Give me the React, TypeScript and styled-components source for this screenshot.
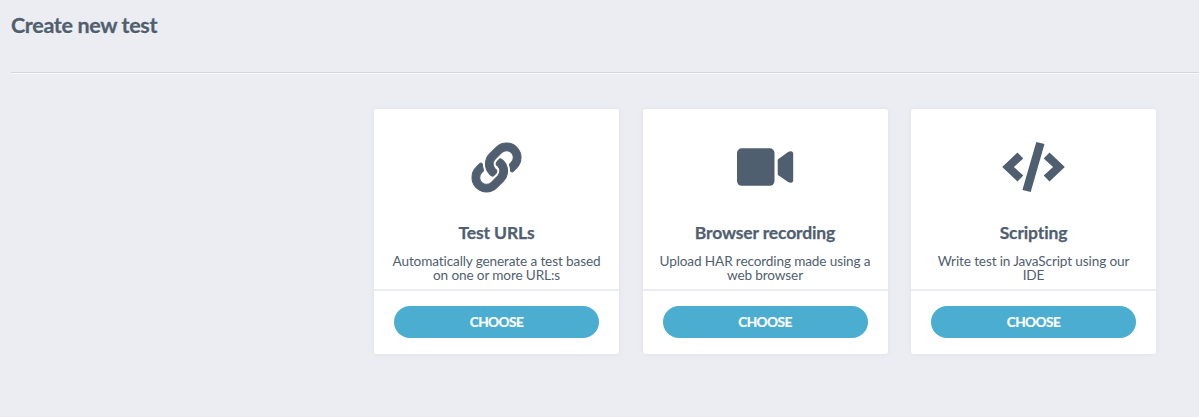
import React from "react";
import styled, { createGlobalStyle } from "styled-components";
import { FaLink } from "react-icons/fa";

const GlobalStyle = createGlobalStyle`
  body {
    margin: 0;
    background: #ecedf2;
    color: #505f70;
    font-family: Lato, "Open Sans", sans-serif;
  }
`;

const Page = styled.main`
  box-sizing: border-box;
  min-height: 417px;
  padding-left: 11px;
  overflow: hidden;
`;

const Header = styled.header`
  box-sizing: border-box;
  height: 73px;
  padding-top: 10px;
  border-bottom: 1px solid #d4d5da;
  box-shadow: 0 1px 0 #f8f9fb;
`;

const Title = styled.h1`
  margin: 0;
  font-size: 21.5px;
  line-height: 31px;
  font-weight: 700;
  letter-spacing: -0.33px;
  -webkit-text-stroke: 0.3px currentColor;
  text-shadow: 0 1px 0 #fff;
  white-space: nowrap;
`;

const Cards = styled.section`
  display: flex;
  justify-content: space-between;
  width: 782px;
  margin: 36px 0 0 363px;
`;

const Card = styled.article`
  box-sizing: border-box;
  width: 245px;
  height: 245px;
  background: #fff;
  border-radius: 3px;
  box-shadow: 0 0 6px rgba(0, 0, 0, 0.05);
  text-align: center;
`;

const CardBody = styled.div`
  box-sizing: border-box;
  height: 182px;
  padding-top: 33px;
  border-bottom: 2px solid #ecedf2;
`;

const IconSlot = styled.div`
  display: flex;
  justify-content: center;
  height: 50px;

  svg {
    display: block;
    overflow: visible;
  }
`;

const LinkIcon = styled(FaLink)`
  width: 49px;
  height: 49px;
  margin: 0.5px 1px 0 0;
  stroke: currentColor;
  stroke-width: 11px;
  stroke-linejoin: round;
`;

const CardTitle = styled.h2`
  margin: 29px 0 0;
  font-size: 17.5px;
  line-height: 24px;
  font-weight: 700;
  letter-spacing: -0.13px;
  -webkit-text-stroke: 0.25px currentColor;
  white-space: nowrap;
`;

const Description = styled.p`
  margin: 9px 0 0;
  font-size: 13.6px;
  line-height: 14px;
  letter-spacing: -0.13px;
  white-space: nowrap;
`;

const Choose = styled.button`
  display: block;
  width: 205px;
  height: 32px;
  margin: 15px auto 0;
  padding: 0;
  border: 0;
  border-radius: 16px;
  background: #4badd0;
  color: #fff;
  font: 700 13.6px/32px Lato, "Open Sans", sans-serif;
  letter-spacing: -0.5px;
  -webkit-text-stroke: 0.2px currentColor;
`;

const VideoIcon = () => (
  <svg width="58" height="50" viewBox="0 0 58 50" fill="currentColor">
    <rect x="1" y="6.3" width="37.5" height="37.5" rx="4.7" />
    <path d="M41.7 18.2Q41.7 17.4 42.4 16.9L52.1 10.1Q53.4 9.2 55.2 9.3Q57.2 9.6 57.2 11.6V38.5Q57.2 40.5 55.2 40.8Q53.4 40.9 52.1 40L42.4 33.2Q41.7 32.7 41.7 31.9Z" />
  </svg>
);

const CodeIcon = () => (
  <svg width="63" height="50" viewBox="0.5 0 63 50" fill="currentColor">
    <path d="M.7 25 16 10.6 21.8 16.4 12.4 25 21.8 33.6 16 39.4ZM63.3 25 48 10.6 42.2 16.4 51.6 25 42.2 33.6 48 39.4ZM34.8 0 43 2.1 29.2 50 20.9 47.9Z" />
  </svg>
);

const options = [
  { title: "Test URLs", lines: ["Automatically generate a test based", "on one or more URL:s"], icon: <LinkIcon /> },
  { title: "Browser recording", lines: ["Upload HAR recording made using a", "web browser"], icon: <VideoIcon /> },
  { title: "Scripting", lines: ["Write test in JavaScript using our", "IDE"], icon: <CodeIcon /> },
];

export default function App() {
  return (
    <>
      <GlobalStyle />
      <Page>
        <Header>
          <Title>Create new test</Title>
        </Header>
        <Cards>
          {options.map((option) => (
            <Card key={option.title}>
              <CardBody>
                <IconSlot>{option.icon}</IconSlot>
                <CardTitle>{option.title}</CardTitle>
                <Description>
                  {option.lines[0]}
                  <br />
                  {option.lines[1]}
                </Description>
              </CardBody>
              <Choose type="button">CHOOSE</Choose>
            </Card>
          ))}
        </Cards>
      </Page>
    </>
  );
}
